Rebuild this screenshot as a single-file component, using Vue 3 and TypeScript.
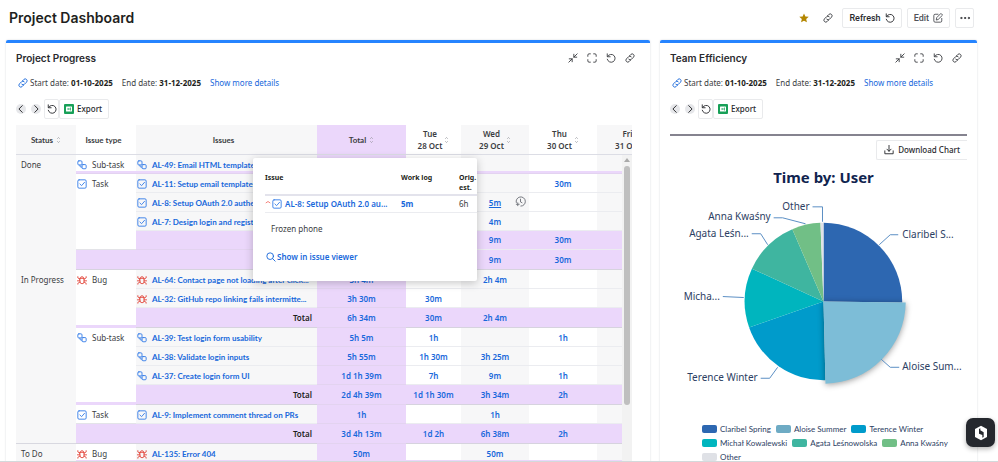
<script setup lang="ts">
import { computed } from 'vue'

type IssueKind = 'subtask' | 'task' | 'bug'
type RowKind = 'single' | 'short' | 'total' | 'group' | 'strip'

interface Row {
  kind: RowKind
  status?: string
  statusSpan?: number
  type?: IssueKind
  typeSpan?: number
  issue?: string
  issueType?: IssueKind
  label?: string
  total?: string
  days: string[]
  end?: boolean
}

interface Slice {
  name: string
  label: string
  color: string
  legend: string
  from: number
  to: number
  line: string
  x: number
  y: number
  anchor: 'start' | 'end'
  active?: boolean
}

const typeNames: Record<IssueKind, string> = { subtask: 'Sub-task', task: 'Task', bug: 'Bug' }

const dayColumns = [
  { day: 'Tue', date: '28 Oct' },
  { day: 'Wed', date: '29 Oct' },
  { day: 'Thu', date: '30 Oct' },
  { day: 'Fri', date: '31 Oct' },
]

const rows: Row[] = [
  { kind: 'short', status: 'Done', statusSpan: 7, type: 'subtask', typeSpan: 1, issue: 'AL-49: Email HTML templates', issueType: 'subtask', days: ['', '', '', ''] },
  { kind: 'strip', days: [] },
  { kind: 'single', type: 'task', typeSpan: 4, issue: 'AL-11: Setup email templates', issueType: 'task', days: ['', '', '30m', ''] },
  { kind: 'single', issue: 'AL-8: Setup OAuth 2.0 authe...', issueType: 'task', days: ['', '5m', '', ''] },
  { kind: 'single', issue: 'AL-7: Design login and registration', issueType: 'task', days: ['', '4m', '', ''] },
  { kind: 'total', days: ['', '9m', '30m', ''] },
  { kind: 'group', days: ['', '9m', '30m', ''], end: true },
  { kind: 'single', status: 'In Progress', statusSpan: 9, type: 'bug', typeSpan: 3, issue: 'AL-64: Contact page not loading after click...', issueType: 'bug', total: '3h 4m', days: ['', '2h 4m', '', ''] },
  { kind: 'single', issue: 'AL-32: GitHub repo linking fails intermitte...', issueType: 'bug', total: '3h 30m', days: ['30m', '', '', ''] },
  { kind: 'total', label: 'Total', total: '6h 34m', days: ['30m', '2h 4m', '', ''], end: true },
  { kind: 'single', type: 'subtask', typeSpan: 4, issue: 'AL-39: Test login form usability', issueType: 'subtask', total: '5h 5m', days: ['1h', '', '1h', ''] },
  { kind: 'single', issue: 'AL-38: Validate login inputs', issueType: 'subtask', total: '5h 55m', days: ['1h 30m', '3h 25m', '', ''] },
  { kind: 'single', issue: 'AL-37: Create login form UI', issueType: 'subtask', total: '1d 1h 39m', days: ['7h', '9m', '1h', ''] },
  { kind: 'total', label: 'Total', total: '2d 4h 39m', days: ['1d 1h 30m', '3h 34m', '2h', ''], end: true },
  { kind: 'single', type: 'task', typeSpan: 1, issue: 'AL-9: Implement comment thread on PRs', issueType: 'task', total: '1h', days: ['', '1h', '', ''] },
  { kind: 'group', label: 'Total', total: '3d 4h 13m', days: ['1d 2h', '6h 38m', '2h', ''], end: true },
  { kind: 'short', status: 'To Do', statusSpan: 2, type: 'bug', typeSpan: 1, issue: 'AL-135: Error 404', issueType: 'bug', total: '50m', days: ['', '50m', '', ''] },
  { kind: 'strip', days: [] },
]

const slices: Slice[] = [
  { name: 'Claribel Spring', label: 'Claribel S...', color: '#2d67b1', legend: '#2d67b1', from: 0, to: 90.7, line: 'M210 85 221 75H229', x: 233, y: 78, anchor: 'start' },
  { name: 'Terence Winter', label: 'Terence Winter', color: '#009bcb', legend: '#009bcb', from: 178.6, to: 250.8, line: 'M108 208 100 219H91', x: 88, y: 222, anchor: 'end' },
  { name: 'Michał Kowalewski', label: 'Micha...', color: '#00b5be', legend: '#00b5be', from: 250.8, to: 294.6, line: 'M74 138 53 137', x: 50, y: 140, anchor: 'end' },
  { name: 'Agata Leśnowolska', label: 'Agata Leśn...', color: '#3fb5a0', legend: '#3fb5a0', from: 294.6, to: 336.7, line: 'M98 85 91 74H82', x: 79, y: 77, anchor: 'end' },
  { name: 'Anna Kwaśny', label: 'Anna Kwaśny', color: '#71bf86', legend: '#71bf86', from: 336.7, to: 357.8, line: 'M136 64 113 58H104', x: 101, y: 60, anchor: 'end' },
  { name: 'Other', label: 'Other', color: '#e0e2e7', legend: '#dfe1e6', from: 357.8, to: 360, line: 'M153 62V47H143', x: 140, y: 50, anchor: 'end' },
  { name: 'Aloise Summer', label: 'Aloise Sum...', color: '#7dbdd7', legend: '#6eabc4', from: 90.7, to: 178.6, line: 'M212 200 221 208H230', x: 233, y: 211, anchor: 'start', active: true },
]

const legendItems = computed(() => [slices[0], slices[6], ...slices.slice(1, 6)])

function arc(slice: Slice): string {
  const r = slice.active ? 82.5 : 79
  const point = (deg: number) => {
    const a = (deg * Math.PI) / 180
    return `${(154 + r * Math.sin(a)).toFixed(2)} ${(142 - r * Math.cos(a)).toFixed(2)}`
  }
  return `M154 142L${point(slice.from)}A${r} ${r} 0 0 1 ${point(slice.to)}Z`
}
</script>

<template>
  <svg class="sprite" aria-hidden="true">
    <symbol id="i-link" viewBox="0 0 24 24">
      <path d="M9 15a4.500 4.500 0 0 0 6.500 0l5-5a4.500 4.500 0 0 0-6.500-6.500l-3 3M15 9a4.500 4.500 0 0 0-6.500 0l-5 5a4.500 4.500 0 0 0 6.500 6.500l3-3" />
    </symbol>
    <symbol id="i-reload" viewBox="0 0 24 24">
      <path d="M3 2v7h7M4 8a9.500 9.500 0 1 1-1 7" />
    </symbol>
    <symbol id="i-expand" viewBox="0 0 24 24">
      <path d="M2 8V5a3 3 0 0 1 3-3h3M16 2h3a3 3 0 0 1 3 3v3M22 16v3a3 3 0 0 1-3 3h-3M8 22H5a3 3 0 0 1-3-3v-3" />
    </symbol>
    <symbol id="i-shrink" viewBox="0 0 24 24">
      <path d="M22 2l-8 8M14 3v7h7M2 22l8-8M3 14h7v7" />
    </symbol>
    <symbol id="i-subtask" viewBox="0 0 24 24">
      <rect x="2" y="2" width="10" height="10" rx="2.5" />
      <path d="M7 12v2q0 3 3 3h2" />
      <rect x="12" y="11" width="10" height="10" rx="2.5" />
    </symbol>
    <symbol id="i-task" viewBox="0 0 24 24">
      <rect x="2" y="2" width="20" height="20" rx="3" />
      <path d="M7 12l4 4 7-8" />
    </symbol>
    <symbol id="i-bug" viewBox="0 0 24 24">
      <path d="M7 8h10v8a5 5 0 0 1-10 0zM8 8a4 4 0 0 1 8 0M2 4v3l5 3M22 4v3l-5 3M1 14h6M17 14h6M2 22v-2l5-3M22 22v-2l-5-3" />
    </symbol>
    <symbol id="i-sort" viewBox="0 0 8 12">
      <path d="M2 4l2-2 2 2M2 8l2 2 2-2" />
    </symbol>
  </svg>

  <div class="page">
    <header class="top">
      <h1>Project Dashboard</h1>
      <button class="bare star" aria-label="Favourite">
        <svg viewBox="0 0 24 24" class="ico"><path d="M12 1l3.300 7.300 8 .9-6 5.300 1.700 7.900L12 18.400 5 22.400l1.700-7.900-6-5.300 8-.9z" /></svg>
      </button>
      <button class="bare" aria-label="Copy link"><svg class="ico"><use href="#i-link" /></svg></button>
      <div class="actions">
        <button class="btn">Refresh <svg class="ico"><use href="#i-reload" /></svg></button>
        <button class="btn edit">
          Edit
          <svg class="ico" viewBox="0 0 24 24"><path d="M12 3H5a3 3 0 0 0-3 3v13a3 3 0 0 0 3 3h13a3 3 0 0 0 3-3v-6M8 16l1-5L19 1l4 4-10 10z" /></svg>
        </button>
        <button class="btn more" aria-label="More">
          <svg class="ico" viewBox="0 0 24 24"><circle cx="3" cy="12" r="1.500" /><circle cx="12" cy="12" r="1.500" /><circle cx="21" cy="12" r="1.500" /></svg>
        </button>
      </div>
    </header>

    <main class="panels">
      <section v-for="title in ['Project Progress', 'Team Efficiency']" :key="title" class="panel">
        <div class="panel-head">
          <h2>{{ title }}</h2>
          <button class="bare" aria-label="Collapse"><svg class="ico"><use href="#i-shrink" /></svg></button>
          <button class="bare" aria-label="Full screen"><svg class="ico"><use href="#i-expand" /></svg></button>
          <button class="bare" aria-label="Reload"><svg class="ico"><use href="#i-reload" /></svg></button>
          <button class="bare" aria-label="Link"><svg class="ico"><use href="#i-link" /></svg></button>
        </div>
        <div class="info">
          <svg class="ico blue"><use href="#i-link" /></svg>
          <span>Start date: <b>01-10-2025</b></span>
          <span>End date: <b>31-12-2025</b></span>
          <a href="#">Show more details</a>
        </div>
        <div class="tools">
          <button class="round" aria-label="Previous"><svg class="ico" viewBox="0 0 24 24"><path d="M15 4l-8 8 8 8" /></svg></button>
          <button class="round" aria-label="Next"><svg class="ico" viewBox="0 0 24 24"><path d="M9 4l8 8-8 8" /></svg></button>
          <div class="tool-group">
            <button class="btn square" aria-label="Reset"><svg class="ico"><use href="#i-reload" /></svg></button>
            <button class="btn export">
              <svg class="sheet" viewBox="0 0 20 20">
                <rect width="20" height="20" rx="2" fill="#18a058" />
                <rect x="4" y="5" width="12" height="10" rx="1" fill="#fff" />
                <path d="M7 8l4 4M11 8l-4 4M13 7v6" stroke="#18a058" stroke-width="1.500" />
              </svg>
              Export
            </button>
          </div>
        </div>

        <div v-if="title === 'Project Progress'" class="table-area">
          <div class="table-clip">
            <table>
              <colgroup>
                <col class="c-narrow" /><col class="c-narrow" /><col class="c-issue" /><col class="c-total" />
                <col class="c-tue" /><col class="c-day" /><col class="c-day" /><col class="c-day" />
              </colgroup>
              <thead>
                <tr>
                  <th class="grey"><span class="sortable">Status <svg class="sort"><use href="#i-sort" /></svg></span></th>
                  <th class="left">Issue type</th>
                  <th class="grey issues-head">Issues</th>
                  <th class="purple"><span class="sortable">Total <svg class="sort"><use href="#i-sort" /></svg></span></th>
                  <th v-for="(d, i) in dayColumns" :key="d.date" :class="{ grey: i % 2 === 1 }">
                    <span class="sortable day"><span>{{ d.day }}<br />{{ d.date }}</span> <svg class="sort"><use href="#i-sort" /></svg></span>
                  </th>
                </tr>
              </thead>
              <tbody>
                <tr v-for="(row, r) in rows" :key="r" :class="[row.kind, { end: row.end }]">
                  <td v-if="row.status" class="status grey" :rowspan="row.statusSpan">{{ row.status }}</td>
                  <td v-if="row.kind === 'strip'" colspan="7"></td>
                  <template v-else>
                    <td v-if="row.type" class="type" :class="{ banded: (row.typeSpan ?? 1) > 1 && r > 3 }" :rowspan="row.typeSpan">
                      <svg class="ico kind" :class="row.type"><use :href="`#i-${row.type}`" /></svg>{{ typeNames[row.type] }}
                    </td>
                    <td v-if="row.issue" class="issue">
                      <svg class="ico kind" :class="row.issueType"><use :href="`#i-${row.issueType}`" /></svg><a href="#">{{ row.issue }}</a>
                    </td>
                    <td v-else class="label" :colspan="row.kind === 'group' ? 2 : 1">{{ row.label }}</td>
                    <td class="num purple">{{ row.total }}</td>
                    <td v-for="(value, i) in row.days" :key="i" class="num" :class="{ grey: i % 2 === 1 }">
                      <span :class="{ hovered: value === '5m' }">{{ value }}</span>
                      <svg v-if="value === '5m'" class="add-log" viewBox="0 0 24 24">
                        <path d="M3 15a10 10 0 1 1 9 7M12 6v7l4 2M6 14v8M2 18h8" />
                      </svg>
                    </td>
                  </template>
                </tr>
              </tbody>
            </table>
          </div>
          <div class="scrollbar">
            <svg viewBox="0 0 10 10"><path d="M2 7l3-4 3 4z" /></svg>
            <i></i>
          </div>

          <div class="popup">
            <table>
              <colgroup><col class="p-issue" /><col class="p-log" /><col /></colgroup>
              <thead>
                <tr><th>Issue</th><th>Work log</th><th>Orig.<br />est.</th></tr>
              </thead>
              <tbody>
                <tr>
                  <td>
                    <svg class="prio" viewBox="0 0 8 8"><path d="M1 4l3-2 3 2" /></svg>
                    <svg class="ico kind task"><use href="#i-task" /></svg>
                    <a href="#">AL-8: Setup OAuth 2.0 au...</a>
                  </td>
                  <td><b>5m</b></td>
                  <td>6h</td>
                </tr>
              </tbody>
            </table>
            <p>Frozen phone</p>
            <a href="#" class="viewer">
              <svg class="ico" viewBox="0 0 24 24"><circle cx="10" cy="10" r="8" /><path d="M16 16l6 6" /></svg>Show in issue viewer
            </a>
          </div>
        </div>

        <div v-else class="chart">
          <button class="btn download">
            <svg class="ico" viewBox="0 0 24 24"><path d="M12 1v14M7 10l5 5 5-5M2 14v7h20v-7" /></svg>
            Download Chart
          </button>
          <svg class="pie" viewBox="0 0 298 262" role="img" aria-label="Time by: User">
            <text class="pie-title" x="154" y="23" text-anchor="middle">Time by: User</text>
            <g v-for="s in slices" :key="s.name">
              <path :d="arc(s)" :fill="s.color" :class="{ active: s.active }" />
              <path :d="s.line" class="leader" />
              <text :x="s.x" :y="s.y" :text-anchor="s.anchor" class="pie-label">{{ s.label }}</text>
            </g>
          </svg>
          <ul class="legend">
            <li v-for="s in legendItems" :key="s.name"><i :style="{ background: s.legend }"></i>{{ s.name }}</li>
          </ul>
        </div>
      </section>
    </main>

    <button class="widget" aria-label="Open assistant">
      <svg viewBox="0 0 24 24">
        <path d="M12 1l9 5v12l-9 5-9-5V6z" fill="#fff" />
        <path d="M9 6v7l5 2v4l2-1v-7l-5-3V5z" fill="#25282e" />
      </svg>
    </button>
  </div>
</template>

<style>
body {
  background: #fff;
}
</style>

<style scoped>
* {
  box-sizing: border-box;
}
.sprite {
  position: absolute;
  width: 0;
  height: 0;
}
.page {
  display: flex;
  flex-direction: column;
  height: 100vh;
  overflow: hidden;
  border-bottom: 1px solid #d3d9db;
  color: #3b3d42;
  font: 8px/12px "Noto Sans", "Open Sans", sans-serif;
}
button {
  font: inherit;
  color: inherit;
}
a {
  color: #1868db;
  text-decoration: none;
}
.ico {
  flex: none;
  width: 10px;
  height: 10px;
  fill: none;
  stroke: currentColor;
  stroke-width: 2.2;
  stroke-linecap: round;
  stroke-linejoin: round;
}
.bare {
  display: flex;
  padding: 0;
  border: 0;
  background: none;
}
.top {
  display: flex;
  flex: none;
  align-items: center;
  height: 40px;
  padding: 0 24px 5px 9px;
  gap: 14px;
}
h1 {
  flex: 1;
  margin: 0;
  color: #1e1f21;
  font: 600 14px/20px Inter, sans-serif;
}
.star .ico {
  fill: #b38600;
  stroke: none;
}
.actions {
  display: flex;
  margin-left: -5px;
  gap: 5px;
}
.btn {
  display: flex;
  align-items: center;
  justify-content: center;
  height: 20px;
  padding: 0 7px;
  gap: 4px;
  border: 1px solid #e9eaec;
  border-radius: 2px;
  background: #fff;
  color: #292a2e;
}
.actions .btn {
  padding: 0 6px;
  font: 500 9px/12px Roboto, sans-serif;
}
.actions .edit {
  color: #505258;
}
.actions .more {
  width: 19px;
  padding: 0;
}
.panels {
  display: grid;
  flex: 1;
  grid-template-columns: 644fr 317fr;
  gap: 10px;
  min-height: 0;
  padding: 0 21px 0 6px;
}
.panel {
  min-width: 0;
  padding: 0 10px;
  border-top: 3px solid #2684ff;
  border-radius: 2px 2px 0 0;
  box-shadow: 0 0 2px #d0d3da;
}
.panel-head {
  display: flex;
  align-items: center;
  height: 30px;
  padding-right: 5px;
  gap: 9px;
}
h2 {
  flex: 1;
  margin: 0;
  color: #292a2e;
  font: 600 10px/14px Inter, sans-serif;
}
.info {
  display: flex;
  align-items: center;
  height: 20px;
  padding-left: 2px;
  gap: 9px;
}
.info .blue {
  margin-right: -7px;
  color: #1868db;
}
.info b {
  color: #1e1f21;
}
.tools {
  display: flex;
  align-items: center;
  height: 32px;
  gap: 5px;
}
.round {
  display: flex;
  align-items: center;
  justify-content: center;
  width: 10px;
  height: 10px;
  padding: 0;
  border: 0;
  border-radius: 50%;
  background: #e6e7ea;
  color: #1e1f21;
}
.tool-group {
  display: flex;
  margin-left: -2px;
}
.square {
  width: 15px;
  padding: 0;
}
.export {
  padding: 0 6px 0 4px;
  gap: 3px;
  font-weight: 500;
}
.sheet {
  width: 10px;
  height: 10px;
}
.table-area {
  position: relative;
  margin-right: 8px;
}
.table-clip {
  overflow: hidden;
}
table {
  border-spacing: 0;
  table-layout: fixed;
}
.table-clip table {
  width: 648px;
}
.c-narrow {
  width: 60px;
}
.c-issue {
  width: 181px;
}
.c-total {
  width: 89px;
}
.c-tue {
  width: 55px;
}
.c-day {
  width: 68px;
}
th,
td {
  height: 19px;
  padding: 0;
  border-bottom: 1px solid #ebecf0;
}
th {
  height: 30px;
  border-color: #dcdde5;
  font: 700 8px/12px Lato, sans-serif;
}
.issues-head {
  padding-right: 6px;
}
.left {
  padding-right: 5px;
}
.grey,
.issue {
  background: #f7f7f8;
}
.purple,
.total .num,
.group .num,
.label,
.strip td {
  background: #ebd7fb;
}
.sortable {
  display: inline-flex;
  align-items: center;
  gap: 3px;
}
.day {
  gap: 2px;
  font: 600 8px/12px "Noto Sans", sans-serif;
  white-space: nowrap;
}
.sort {
  width: 5px;
  height: 8px;
  fill: none;
  stroke: #85878d;
}
.status,
.type {
  padding-top: 4px;
  vertical-align: top;
}
.status {
  padding-left: 5px;
  border-color: #d8d8e0;
}
.type {
  border-color: #e3e3e8;
}
.type.banded {
  border-bottom: 3px solid #ebd7fb;
}
.kind {
  margin: 0 5px 0 1px;
  vertical-align: -2px;
  color: #357de8;
}
.kind.bug {
  color: #e2483d;
}
.issue,
.num,
.label {
  white-space: nowrap;
  font-weight: 600;
}
.issue {
  font: 700 8px/12px Lato, sans-serif;
}
.single .issue,
.single .num {
  padding-top: 2px;
}
.num {
  position: relative;
  text-align: center;
  color: #1868db;
}
.num.purple,
.label {
  border-color: #e3d3f0;
}
.label {
  padding-right: 5px;
  text-align: right;
  color: #1e1f21;
}
.short td {
  height: 16px;
  padding-top: 4px;
  border-bottom: 0;
}
.strip td {
  height: 3px;
  border-bottom: 1px solid #e3d3f0;
}
.end td {
  height: 20px;
  border-color: #d6d3de;
}
.hovered {
  text-decoration: underline;
}
.add-log {
  position: absolute;
  top: 3px;
  right: 3px;
  width: 11px;
  height: 11px;
  fill: none;
  stroke: #6b6e76;
  stroke-width: 2;
}
.scrollbar {
  position: absolute;
  top: 30px;
  right: 0;
  bottom: 0;
  width: 10px;
  background: #f2f2f2;
}
.scrollbar svg {
  display: block;
  width: 10px;
  height: 10px;
  fill: #aaa;
}
.scrollbar i {
  display: block;
  width: 6px;
  height: 239px;
  margin: 1px auto 0;
  border-radius: 3px;
  background: #bfbfbf;
}
.popup {
  position: absolute;
  top: 33px;
  left: 237px;
  width: 224px;
  height: 123px;
  padding: 12px 0 0 12px;
  overflow: hidden;
  border-radius: 2px;
  background: #fff;
  box-shadow: 0 2px 8px rgba(30, 31, 33, 0.25);
}
.popup table {
  width: 100%;
}
.p-issue {
  width: 136px;
}
.p-log {
  width: 58px;
}
.popup th {
  height: 26px;
  padding-top: 3px;
  border-bottom: 2px solid #e3e3ec;
  color: #1e1f21;
  font: 700 7px/10px "Noto Sans", sans-serif;
  text-align: left;
  vertical-align: top;
}
.popup td {
  height: 17px;
  white-space: nowrap;
}
.popup td a {
  font-weight: 600;
}
.popup td b {
  color: #1868db;
}
.popup .kind {
  margin: 0 3px 0 1px;
}
.prio {
  width: 6px;
  height: 8px;
  fill: none;
  stroke: #f15b50;
}
.popup p {
  margin: 10px 0 16px 6px;
}
.viewer {
  display: flex;
  align-items: center;
  padding-left: 1px;
  gap: 1px;
  font-weight: 600;
}
.chart {
  display: flex;
  flex-direction: column;
  margin-top: 9px;
  padding-top: 4px;
  border-top: 2px solid #85838f;
}
.download {
  align-self: flex-end;
  border-right: 0;
  border-radius: 2px 0 0 2px;
  font-weight: 500;
}
.pie {
  display: block;
  width: 100%;
}
.pie-title {
  fill: #10244f;
  font-size: 15px;
  font-weight: 700;
}
.pie-label {
  fill: #2c3e63;
  font-size: 10px;
}
.leader {
  fill: none;
  stroke: #5b8fc4;
}
.active {
  filter: drop-shadow(0 1px 3px rgba(0, 0, 0, 0.4));
}
.legend {
  display: flex;
  flex-wrap: wrap;
  margin: 2px 0 0;
  padding: 0 14px 0 32px;
  gap: 2px 5px;
  color: #2c3e63;
  font-family: Lato, sans-serif;
  list-style: none;
}
.legend li {
  display: flex;
  align-items: center;
  gap: 3px;
}
.legend i {
  width: 15px;
  height: 8px;
  border-radius: 2px;
}
.widget {
  position: fixed;
  right: 3px;
  bottom: 15px;
  display: grid;
  place-items: center;
  width: 29px;
  height: 29px;
  padding: 0;
  border: 0;
  border-radius: 7px;
  background: #25282e;
  box-shadow: 0 2px 5px rgba(0, 0, 0, 0.3);
}
.widget svg {
  width: 16px;
  height: 16px;
}
</style>
